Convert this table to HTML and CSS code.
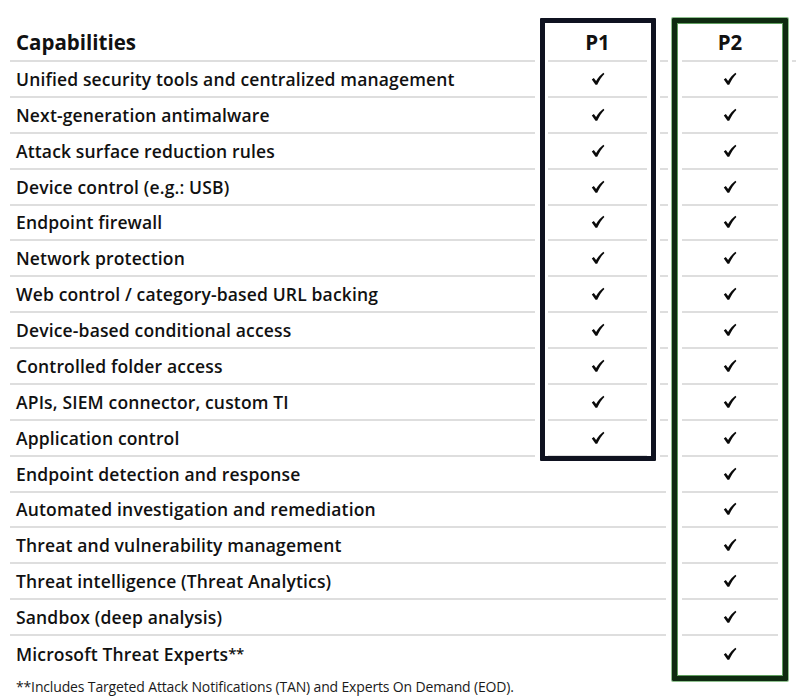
FILE: index.html
```html
<!DOCTYPE html>
<html>
<head>
<meta charset="utf-8">
<link rel="stylesheet" href="styles.css">
</head>
<body>
<div class="page">
  <div class="grid">
    <div class="cell label head r1">Capabilities</div>
    <div class="cell p1 head r1">P1</div>
    <div class="cell gap r1"></div>
    <div class="cell p2 head r1">P2</div>
    <div class="cell tail r1"></div>

    <div class="cell label r2">Unified security tools and centralized management</div>
    <div class="cell p1 r2"><svg class="chk" viewBox="0 0 14 14"><path d="M0.8 7.6 L2.8 6 L5.1 9 C7.2 5.6 9.6 2.9 12.4 0.8 L13.4 1.9 C10.6 4.6 8.2 8.3 6.2 12.8 L4.5 12.8 Z"/></svg></div>
    <div class="cell gap r2"></div>
    <div class="cell p2 r2"><svg class="chk" viewBox="0 0 14 14"><path d="M0.8 7.6 L2.8 6 L5.1 9 C7.2 5.6 9.6 2.9 12.4 0.8 L13.4 1.9 C10.6 4.6 8.2 8.3 6.2 12.8 L4.5 12.8 Z"/></svg></div>

    <div class="cell label r3">Next-generation antimalware</div>
    <div class="cell p1 r3"><svg class="chk" viewBox="0 0 14 14"><path d="M0.8 7.6 L2.8 6 L5.1 9 C7.2 5.6 9.6 2.9 12.4 0.8 L13.4 1.9 C10.6 4.6 8.2 8.3 6.2 12.8 L4.5 12.8 Z"/></svg></div>
    <div class="cell gap r3"></div>
    <div class="cell p2 r3"><svg class="chk" viewBox="0 0 14 14"><path d="M0.8 7.6 L2.8 6 L5.1 9 C7.2 5.6 9.6 2.9 12.4 0.8 L13.4 1.9 C10.6 4.6 8.2 8.3 6.2 12.8 L4.5 12.8 Z"/></svg></div>

    <div class="cell label r4">Attack surface reduction rules</div>
    <div class="cell p1 r4"><svg class="chk" viewBox="0 0 14 14"><path d="M0.8 7.6 L2.8 6 L5.1 9 C7.2 5.6 9.6 2.9 12.4 0.8 L13.4 1.9 C10.6 4.6 8.2 8.3 6.2 12.8 L4.5 12.8 Z"/></svg></div>
    <div class="cell gap r4"></div>
    <div class="cell p2 r4"><svg class="chk" viewBox="0 0 14 14"><path d="M0.8 7.6 L2.8 6 L5.1 9 C7.2 5.6 9.6 2.9 12.4 0.8 L13.4 1.9 C10.6 4.6 8.2 8.3 6.2 12.8 L4.5 12.8 Z"/></svg></div>

    <div class="cell label r5">Device control (e.g.: USB)</div>
    <div class="cell p1 r5"><svg class="chk" viewBox="0 0 14 14"><path d="M0.8 7.6 L2.8 6 L5.1 9 C7.2 5.6 9.6 2.9 12.4 0.8 L13.4 1.9 C10.6 4.6 8.2 8.3 6.2 12.8 L4.5 12.8 Z"/></svg></div>
    <div class="cell gap r5"></div>
    <div class="cell p2 r5"><svg class="chk" viewBox="0 0 14 14"><path d="M0.8 7.6 L2.8 6 L5.1 9 C7.2 5.6 9.6 2.9 12.4 0.8 L13.4 1.9 C10.6 4.6 8.2 8.3 6.2 12.8 L4.5 12.8 Z"/></svg></div>

    <div class="cell label r6">Endpoint firewall</div>
    <div class="cell p1 r6"><svg class="chk" viewBox="0 0 14 14"><path d="M0.8 7.6 L2.8 6 L5.1 9 C7.2 5.6 9.6 2.9 12.4 0.8 L13.4 1.9 C10.6 4.6 8.2 8.3 6.2 12.8 L4.5 12.8 Z"/></svg></div>
    <div class="cell gap r6"></div>
    <div class="cell p2 r6"><svg class="chk" viewBox="0 0 14 14"><path d="M0.8 7.6 L2.8 6 L5.1 9 C7.2 5.6 9.6 2.9 12.4 0.8 L13.4 1.9 C10.6 4.6 8.2 8.3 6.2 12.8 L4.5 12.8 Z"/></svg></div>

    <div class="cell label r7">Network protection</div>
    <div class="cell p1 r7"><svg class="chk" viewBox="0 0 14 14"><path d="M0.8 7.6 L2.8 6 L5.1 9 C7.2 5.6 9.6 2.9 12.4 0.8 L13.4 1.9 C10.6 4.6 8.2 8.3 6.2 12.8 L4.5 12.8 Z"/></svg></div>
    <div class="cell gap r7"></div>
    <div class="cell p2 r7"><svg class="chk" viewBox="0 0 14 14"><path d="M0.8 7.6 L2.8 6 L5.1 9 C7.2 5.6 9.6 2.9 12.4 0.8 L13.4 1.9 C10.6 4.6 8.2 8.3 6.2 12.8 L4.5 12.8 Z"/></svg></div>

    <div class="cell label r8">Web control / category-based URL backing</div>
    <div class="cell p1 r8"><svg class="chk" viewBox="0 0 14 14"><path d="M0.8 7.6 L2.8 6 L5.1 9 C7.2 5.6 9.6 2.9 12.4 0.8 L13.4 1.9 C10.6 4.6 8.2 8.3 6.2 12.8 L4.5 12.8 Z"/></svg></div>
    <div class="cell gap r8"></div>
    <div class="cell p2 r8"><svg class="chk" viewBox="0 0 14 14"><path d="M0.8 7.6 L2.8 6 L5.1 9 C7.2 5.6 9.6 2.9 12.4 0.8 L13.4 1.9 C10.6 4.6 8.2 8.3 6.2 12.8 L4.5 12.8 Z"/></svg></div>

    <div class="cell label r9">Device-based conditional access</div>
    <div class="cell p1 r9"><svg class="chk" viewBox="0 0 14 14"><path d="M0.8 7.6 L2.8 6 L5.1 9 C7.2 5.6 9.6 2.9 12.4 0.8 L13.4 1.9 C10.6 4.6 8.2 8.3 6.2 12.8 L4.5 12.8 Z"/></svg></div>
    <div class="cell gap r9"></div>
    <div class="cell p2 r9"><svg class="chk" viewBox="0 0 14 14"><path d="M0.8 7.6 L2.8 6 L5.1 9 C7.2 5.6 9.6 2.9 12.4 0.8 L13.4 1.9 C10.6 4.6 8.2 8.3 6.2 12.8 L4.5 12.8 Z"/></svg></div>

    <div class="cell label r10">Controlled folder access</div>
    <div class="cell p1 r10"><svg class="chk" viewBox="0 0 14 14"><path d="M0.8 7.6 L2.8 6 L5.1 9 C7.2 5.6 9.6 2.9 12.4 0.8 L13.4 1.9 C10.6 4.6 8.2 8.3 6.2 12.8 L4.5 12.8 Z"/></svg></div>
    <div class="cell gap r10"></div>
    <div class="cell p2 r10"><svg class="chk" viewBox="0 0 14 14"><path d="M0.8 7.6 L2.8 6 L5.1 9 C7.2 5.6 9.6 2.9 12.4 0.8 L13.4 1.9 C10.6 4.6 8.2 8.3 6.2 12.8 L4.5 12.8 Z"/></svg></div>

    <div class="cell label r11">APIs, SIEM connector, custom TI</div>
    <div class="cell p1 r11"><svg class="chk" viewBox="0 0 14 14"><path d="M0.8 7.6 L2.8 6 L5.1 9 C7.2 5.6 9.6 2.9 12.4 0.8 L13.4 1.9 C10.6 4.6 8.2 8.3 6.2 12.8 L4.5 12.8 Z"/></svg></div>
    <div class="cell gap r11"></div>
    <div class="cell p2 r11"><svg class="chk" viewBox="0 0 14 14"><path d="M0.8 7.6 L2.8 6 L5.1 9 C7.2 5.6 9.6 2.9 12.4 0.8 L13.4 1.9 C10.6 4.6 8.2 8.3 6.2 12.8 L4.5 12.8 Z"/></svg></div>

    <div class="cell label r12">Application control</div>
    <div class="cell p1 r12"><svg class="chk" viewBox="0 0 14 14"><path d="M0.8 7.6 L2.8 6 L5.1 9 C7.2 5.6 9.6 2.9 12.4 0.8 L13.4 1.9 C10.6 4.6 8.2 8.3 6.2 12.8 L4.5 12.8 Z"/></svg></div>
    <div class="cell gap r12"></div>
    <div class="cell p2 r12"><svg class="chk" viewBox="0 0 14 14"><path d="M0.8 7.6 L2.8 6 L5.1 9 C7.2 5.6 9.6 2.9 12.4 0.8 L13.4 1.9 C10.6 4.6 8.2 8.3 6.2 12.8 L4.5 12.8 Z"/></svg></div>

    <div class="cell label wide r13">Endpoint detection and response</div>
    <div class="cell p2 r13"><svg class="chk" viewBox="0 0 14 14"><path d="M0.8 7.6 L2.8 6 L5.1 9 C7.2 5.6 9.6 2.9 12.4 0.8 L13.4 1.9 C10.6 4.6 8.2 8.3 6.2 12.8 L4.5 12.8 Z"/></svg></div>

    <div class="cell label wide r14">Automated investigation and remediation</div>
    <div class="cell p2 r14"><svg class="chk" viewBox="0 0 14 14"><path d="M0.8 7.6 L2.8 6 L5.1 9 C7.2 5.6 9.6 2.9 12.4 0.8 L13.4 1.9 C10.6 4.6 8.2 8.3 6.2 12.8 L4.5 12.8 Z"/></svg></div>

    <div class="cell label wide r15">Threat and vulnerability management</div>
    <div class="cell p2 r15"><svg class="chk" viewBox="0 0 14 14"><path d="M0.8 7.6 L2.8 6 L5.1 9 C7.2 5.6 9.6 2.9 12.4 0.8 L13.4 1.9 C10.6 4.6 8.2 8.3 6.2 12.8 L4.5 12.8 Z"/></svg></div>

    <div class="cell label wide r16">Threat intelligence (Threat Analytics)</div>
    <div class="cell p2 r16"><svg class="chk" viewBox="0 0 14 14"><path d="M0.8 7.6 L2.8 6 L5.1 9 C7.2 5.6 9.6 2.9 12.4 0.8 L13.4 1.9 C10.6 4.6 8.2 8.3 6.2 12.8 L4.5 12.8 Z"/></svg></div>

    <div class="cell label wide r17">Sandbox (deep analysis)</div>
    <div class="cell p2 r17"><svg class="chk" viewBox="0 0 14 14"><path d="M0.8 7.6 L2.8 6 L5.1 9 C7.2 5.6 9.6 2.9 12.4 0.8 L13.4 1.9 C10.6 4.6 8.2 8.3 6.2 12.8 L4.5 12.8 Z"/></svg></div>

    <div class="cell label wide last r18">Microsoft Threat Experts<span class="ast">**</span></div>
    <div class="cell p2 last r18"><svg class="chk" viewBox="0 0 14 14"><path d="M0.8 7.6 L2.8 6 L5.1 9 C7.2 5.6 9.6 2.9 12.4 0.8 L13.4 1.9 C10.6 4.6 8.2 8.3 6.2 12.8 L4.5 12.8 Z"/></svg></div>

    <div class="box box-p1"></div>
    <div class="box box-p2"></div>
  </div>
  <p class="note">**Includes Targeted Attack Notifications (TAN) and Experts On Demand (EOD).</p>
</div>
</body>
</html>
```

FILE: styles.css
```css
html, body {
  margin: 0;
  padding: 0;
  background: #ffffff;
}

.page {
  width: 810px;
  height: 698px;
  padding-top: 18px;
  box-sizing: border-box;
  font-family: "Open Sans", "DejaVu Sans", sans-serif;
  color: #111111;
  overflow: hidden;
}

.grid {
  margin-left: 10px;
  display: grid;
  grid-template-columns: 530px 116px 16px 116px 12px;
  grid-template-rows: 44px repeat(17, 35.875px);
}

.cell {
  border-bottom: 2px solid #dedede;
  box-sizing: border-box;
  display: flex;
  align-items: center;
}

.cell.last {
  border-bottom: none;
}

.label {
  grid-column: 1;
  margin-right: 5px;
  padding-left: 6px;
  font-size: 17.5px;
  font-weight: 600;
  letter-spacing: 0.15px;
  white-space: nowrap;
}

.label.wide {
  grid-column: 1 / 4;
  margin-right: 6px;
}

.ast {
  letter-spacing: -0.5px;
  font-size: 15px;
  align-self: flex-start;
  margin-top: 7px;
}

.head {
  font-size: 20.5px;
  font-weight: 700;
  letter-spacing: 0;
  padding-top: 5px;
}

.p1 {
  grid-column: 2;
  margin: 0 9px 0 8px;
  justify-content: center;
}

.gap {
  grid-column: 3;
  margin: 0 4px;
}

.p2 {
  grid-column: 4;
  margin: 0 10px;
  justify-content: center;
}

.tail {
  grid-column: 5;
  margin-left: 4px;
  width: 4px;
}

.chk {
  width: 14px;
  height: 14px;
  fill: #0a0a0a;
}

.r1 { grid-row: 1; }
.r2 { grid-row: 2; }
.r3 { grid-row: 3; }
.r4 { grid-row: 4; }
.r5 { grid-row: 5; }
.r6 { grid-row: 6; }
.r7 { grid-row: 7; }
.r8 { grid-row: 8; }
.r9 { grid-row: 9; }
.r10 { grid-row: 10; }
.r11 { grid-row: 11; }
.r12 { grid-row: 12; }
.r13 { grid-row: 13; }
.r14 { grid-row: 14; }
.r15 { grid-row: 15; }
.r16 { grid-row: 16; }
.r17 { grid-row: 17; }
.r18 { grid-row: 18; }

.box {
  box-sizing: border-box;
  pointer-events: none;
}

.box-p1 {
  grid-column: 2;
  grid-row: 1 / 13;
  margin-bottom: -4px;
  border: 5px solid #0f1220;
  border-radius: 1px;
}

.box-p2 {
  grid-column: 4;
  grid-row: 1 / 19;
  margin-bottom: -9px;
  border: 5px solid #0e2a10;
  border-radius: 1px;
  box-shadow: inset 0 0 0 1px #5f9f5f, 0 0 0 1px #8fc08f;
}

.note {
  margin: 7px 0 0 16px;
  font-size: 14px;
  line-height: 16px;
  letter-spacing: -0.15px;
  color: #1a1a1a;
}
```
